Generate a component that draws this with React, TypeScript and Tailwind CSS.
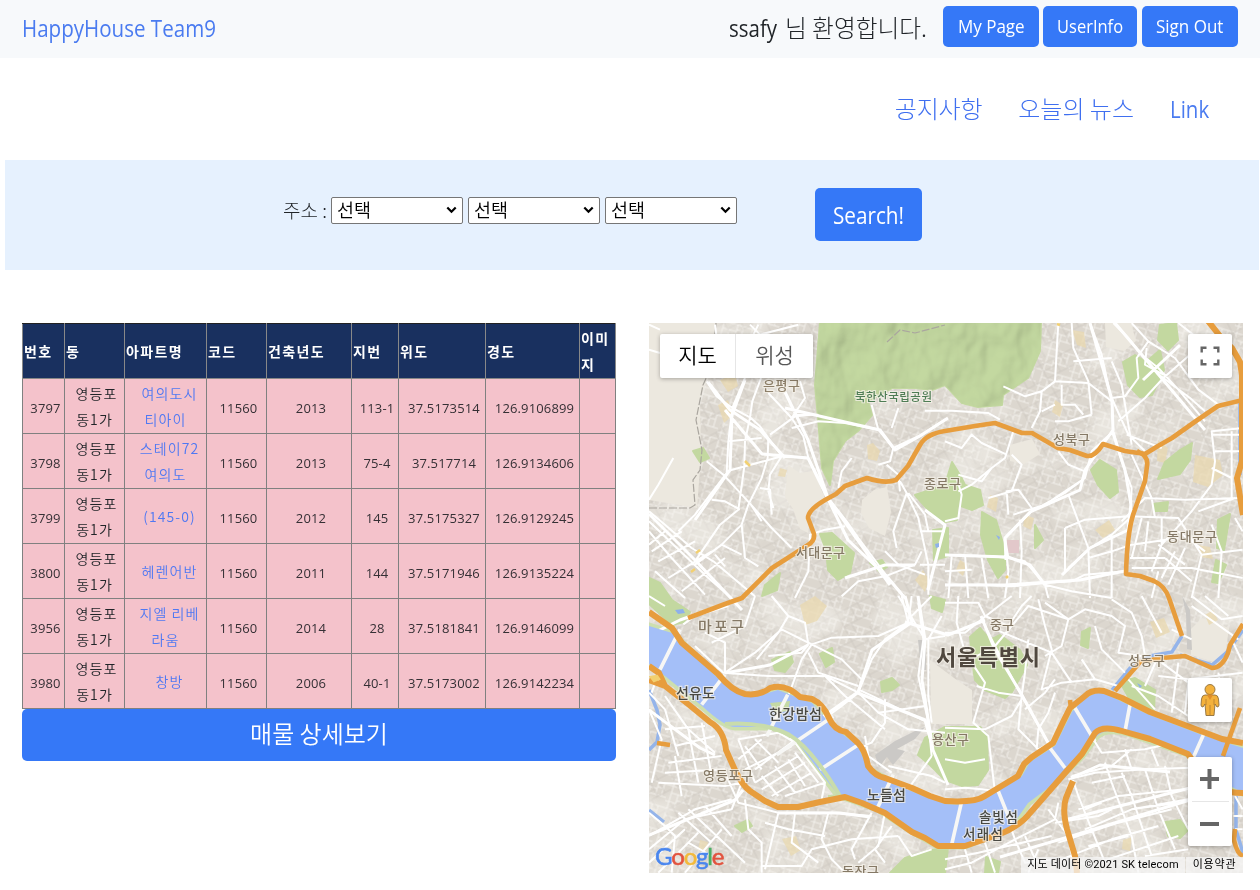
import type { ReactNode } from 'react';

const LATIN = 'font-["Open_Sans","Noto_Sans_CJK_KR",sans-serif]';

type House = { no: string; apt: string[]; year: string; lot: string; lat: string; lng: string };

const houses: House[] = [
  { no: '3797', apt: ['여의도시', '티아이'], year: '2013', lot: '113-1', lat: '37.5173514', lng: '126.9106899' },
  { no: '3798', apt: ['스테이72', '여의도'], year: '2013', lot: '75-4', lat: '37.517714', lng: '126.9134606' },
  { no: '3799', apt: ['(145-0)'], year: '2012', lot: '145', lat: '37.5175327', lng: '126.9129245' },
  { no: '3800', apt: ['헤렌어반'], year: '2011', lot: '144', lat: '37.5171946', lng: '126.9135224' },
  { no: '3956', apt: ['지엘 리베', '라움'], year: '2014', lot: '28', lat: '37.5181841', lng: '126.9146099' },
  { no: '3980', apt: ['창방'], year: '2006', lot: '40-1', lat: '37.5173002', lng: '126.9142234' },
];

function Th({ children }: { children: ReactNode }) {
  return (
    <th className='border border-[#888] border-t-[#222] p-0 pl-px text-left align-middle font-["Noto_Sans_CJK_KR",sans-serif] text-[14px] leading-[26px] font-bold tracking-[1.4px] whitespace-nowrap text-white'>
      {children}
    </th>
  );
}

function Td({ children, className = '' }: { children?: ReactNode; className?: string }) {
  return (
    <td className={`border border-[#808080] p-0 pt-1 text-center align-middle text-[13px] leading-[26px] font-normal tracking-[0.15px] whitespace-nowrap text-[#353035] ${className}`}>
      {children}
    </td>
  );
}

function KoreanTd({ children, link = false }: { children: ReactNode; link?: boolean }) {
  return (
    <td className="border border-[#808080] p-0 text-center align-middle">
      <div className={`font-["Noto_Sans_CJK_KR",sans-serif] text-[14px] leading-[26px] font-[350] tracking-[1.1px] whitespace-nowrap ${link ? 'text-[#4f78f3]' : 'text-[#212529]'}`}>
        {children}
      </div>
    </td>
  );
}

function HouseTable() {
  return (
    <table className="w-[594px] table-fixed border-collapse border border-[#222]">
      <colgroup>
        <col className="w-[42px]" />
        <col className="w-[60px]" />
        <col className="w-[82px]" />
        <col className="w-[60px]" />
        <col className="w-[85px]" />
        <col className="w-[47px]" />
        <col className="w-[87px]" />
        <col className="w-[94px]" />
        <col className="w-[36px]" />
      </colgroup>
      <thead>
        <tr className="h-[55px] bg-[#19305f]">
          <Th>번호</Th>
          <Th>동</Th>
          <Th>아파트명</Th>
          <Th>코드</Th>
          <Th>건축년도</Th>
          <Th>지번</Th>
          <Th>위도</Th>
          <Th>경도</Th>
          <Th>이미<br />지</Th>
        </tr>
      </thead>
      <tbody>
        {houses.map((h) => (
          <tr key={h.no} className="h-[55px] bg-[#f4c2cb]">
            <Td className="pl-1">{h.no}</Td>
            <KoreanTd><span className="pl-[4px]">영등포<br />동1가</span></KoreanTd>
            <KoreanTd link>
              <a className="pl-2">
                {h.apt[0]}
                {h.apt[1] && <><br />{h.apt[1]}</>}
              </a>
            </KoreanTd>
            <Td className="pl-1">11560</Td>
            <Td className="pl-1">{h.year}</Td>
            <Td className="pl-1">{h.lot}</Td>
            <Td className="pl-1">{h.lat}</Td>
            <Td className="pl-1">{h.lng}</Td>
            <Td />
          </tr>
        ))}
      </tbody>
    </table>
  );
}

const parks = [
  'M820 323H1041L1040 351 1028 378 1003 395 1002 405 978 407 962 403 945 385 932 390 915 388 892 388 868 401 872 415 858 431 845 441 833 461 830 485 822 468 818 418 815 385Z',
  'M693 451L703 448 709 458 700 462Z',
  'M649 578L660 583 672 600 690 612 684 622 672 625 649 604Z',
  'M820 534L832 533 854 553 850 573 838 580 828 570 826 550Z',
  'M765 585L780 573 777 590 762 596Z',
  'M870 563L882 560 887 567 880 572Z',
  'M915 495L945 485 952 462 960 475 965 485 980 490 983 505 972 510 958 505 957 520 945 522 930 512Z',
  'M933 530L948 528 948 556 934 560Z',
  'M982 512L996 520 1005 550 1005 570 998 578 988 560 981 535Z',
  'M1100 460L1116 470 1118 492 1110 498 1098 485 1091 470Z',
  'M1123 362L1135 355 1146 362 1160 350 1164 370 1152 395 1140 397 1128 385Z',
  'M1160 325L1176 323 1178 340 1168 350 1158 340Z',
  'M1180 450L1192 443 1190 460 1180 474 1158 479 1165 462Z',
  'M1153 504L1168 502 1167 511 1155 511Z',
  'M1218 520L1230 514 1224 550 1217 548Z',
  'M1216 560L1226 565 1218 583 1212 582Z',
  'M1035 525L1043 540 1035 548Z',
  'M970 637L980 628 990 640 1000 635 1020 650 1027 665 1012 692 1005 698 985 690 975 680 972 660Z',
  'M945 727H980L987 735 988 770 978 785 962 786 945 780 930 765 918 755 925 738Z',
  'M772 660L790 652 793 662 785 672 775 670Z',
  'M820 654L832 648 834 662 826 667Z',
  'M881 682L892 678 899 685 892 690 882 692Z',
  'M930 596L945 600 942 612 932 608Z',
  'M1120 682L1135 678 1155 690 1154 710 1130 700Z',
  'M1082 632L1090 628 1088 648 1081 645Z',
  'M1165 822L1180 820 1188 830 1180 838 1168 836Z',
  'M890 873L905 858 930 850 948 848 945 873Z',
  'M735 826L748 820 752 826 742 832Z',
  'M770 708L785 702 790 714 775 716Z',
  'M986 857L1000 862 998 873H985Z',
];

const tans = [
  'M718 405l10-5 5 15-9 8z', 'M867 445l6-2 7 8-3 10-9-2z', 'M720 380l15-6 3 12-10 6z', 'M780 468l7 2-2 7-7-1z',
  'M915 580l8-10 6 10-4 12z', 'M800 605l15-9 12 10-10 15-12 4z', 'M1055 400l8 5-3 12-8-5z', 'M1072 330l12 2 2 16-9-3z',
  'M1195 455l25 5 3 15-15 12-15-5z', 'M1095 530l14-10 6 10-12 8z', 'M1025 515l9 3-3 12-8-4z', 'M1158 440l10 8-3 15-8-2z',
  'M1150 622l14-4 6 14-14 6z', 'M1205 615l8-5 5 10-9 5z', 'M782 839l14-3 5 14-10 6z', 'M700 840l8 2-2 10-8-2z',
  'M1123 840l9-3-2 14-8-2z', 'M960 560l7 4-4 12-7-6z', 'M990 495l8 3-2 14-9-5z', 'M1198 545l12 2 3 12-12-2z',
];

const campuses = [
  'M649 323H715L710 370 700 400 701 455 697 508 649 500Z',
  'M788 465l12 8 14-2 12 30-15 12-3 20-8-4-7-20-8-12z',
  'M862 500l12-10 13-3 4 25-6 24-16-8-8-15z',
  'M1105 323l26 0 5 18-12 10-18-4z',
  'M1010 445l22-6 8 15-16 10-14-3z',
  'M930 660l24 18 18 12v34h-41z',
  'M1190 630l12-12 27 10-3 22-9 13-26-8z',
];

const streets = [
  // north-west
  'M12 20L45 35M12 95L45 105M315 20L345 50 460 20M325 50L340 20M210 20L215 60M12 580L60 620 140 690 205 730 330 835M12 610L190 780 260 840M12 545L40 500 85 420M12 640L80 720 180 830M20 700L110 640M40 730L150 670M70 780L200 700M110 820L240 720M12 680L60 640M30 760L120 840M185 190L215 235 262 270 315 298 345 325 370 360 412 415M300 180L262 270 250 370 245 465 150 590 100 640M348 180L322 250 315 298 300 370 298 445 280 575 225 620 150 730M370 225L440 300 475 355 490 420 550 540 605 610 640 660 730 780 780 840M250 370L350 360M245 460L300 445 410 415 490 420M185 430L235 470 318 560 380 630 440 690M370 360L368 420 350 480 310 560 290 620 230 680 150 740M410 415L375 470 370 520 385 570M500 290L450 295 375 350M440 330L520 310 600 315 700 335 745 390 735 430 700 440M455 290L520 290M745 390L830 350 900 305M680 260L700 335M440 300L480 240 465 190M318 560L350 610M200 545L240 550 285 575M290 620L300 720 340 745M600 625L540 635 495 650 490 760 450 840M345 510L375 515 380 590M230 680L290 710M210 710L240 745M590 835L640 790 720 775 810 740 830 700M765 490L785 525 820 600 850 740 850 830M785 525L745 640 755 690M790 525L840 590 850 640M725 440L760 470 765 520M620 420L590 460 580 510M760 270L740 330M825 640H900M825 740H900M720 700L760 740 840 770',
  // north-east
  'M-60 278H20L130 285 165 305M340 15L335 100 330 190 290 220 285 280 260 330M380 15L385 90 430 190 440 290M435 15L470 110 500 250 505 340 440 400 420 480 360 525 260 580 180 660 190 720M505 15L550 60 590 110 640 150 700 215 780 310M560 15L610 70 690 120 760 215 820 260M700 15L770 70 735 110 655 180 600 240 520 310M610 70L575 120 580 180 540 235 500 240M655 170L600 140 605 90M635 165L735 240 780 280M330 190L430 195 500 250M350 200V260H390L415 290M330 310L370 310 440 290M385 130L500 120M505 340L530 430 560 510 555 600 500 650 435 690 370 750M500 240L550 350 600 400M500 130L530 200 560 380M220 335L205 340 180 420 140 450 80 500 40 520M175 205L240 235 290 220M0 370L50 390 80 350 110 375 185 410M35 480L50 530 40 600 0 610M40 470L110 490 140 450M205 590L300 560 420 480M190 590L185 520 220 515 260 570M340 400L370 440 420 460M370 530L400 610 430 690M130 540L200 520 230 440 200 410M0 710L140 715 190 720 240 730 300 800 380 820 500 840M0 800L120 800 200 805 300 795 380 790 420 770 540 760M180 660L190 760 180 840M225 605L230 700 225 840M20 715L10 840M60 710L70 840M110 720L130 840M0 760L80 755M360 630L420 605 550 595 700 600 770 710 893 695M360 630L360 760M430 690L435 840M500 650L500 840M430 720L500 700 560 680 700 660M530 610L600 540 720 545 890 540M560 410L620 540 630 600M590 600L560 720M610 610L600 700M650 600V680M555 720H660M560 750H740L893 780M770 710L740 840M740 580L800 500 810 430 800 340 893 330M760 580L870 540M740 580L650 680 620 760M800 350H893M810 400H893M860 340V540M800 450L860 480M870 600L893 640M640 680L720 740M700 640L780 700M660 720L740 790M690 700L650 780M640 760L620 840M720 690L670 800M800 620L830 700 820 840M300 800L310 840M330 260L290 280M545 350L650 390',
  // south-west
  'M12 0L60 30M380 0L430 60 480 80 490 145M430 60L400 110 335 190M330 0L300 90 200 140M105 110L45 220 20 290M115 85L150 60 250 30M150 150L235 230 370 240 540 240 640 290M240 230L330 170 410 100 500 145 590 190 650 250M500 145L470 190 430 300 370 415M500 145L560 125 700 120 790 80 770 0M490 145L470 170 370 180M490 170L520 230 640 270M240 230V140L180 110M800 0L790 80 720 130 680 190 640 290 590 330 330 520M640 290L700 350 790 400M640 280L850 380M540 240L600 300 720 400M820 20L835 130 820 240 850 380 860 480M760 0L840 130 900 120M860 0L790 70M890 60L850 130 850 300 860 380M700 350L840 330M720 310V380L680 440 630 460 540 520M120 260L160 310 200 350M200 310L240 260M12 290L60 340M60 300L130 400 210 470M12 340L50 430 20 560M60 400L180 390M90 450L210 420M90 480L110 600M70 500L230 480M60 530L240 520M130 400L160 560M170 380L200 540M40 560L240 570 290 560M60 340L100 480M240 530L280 620 400 650 560 650 680 660M280 430L400 410 450 440 480 480 540 560 530 610M280 430L330 560M330 560L460 480M280 490L350 430M300 520L440 450M300 450L350 520M330 430L400 500M350 580L480 500M380 600L500 530M420 600L540 560M350 540L400 600M390 510L450 590M430 490L480 570M450 470L520 560M290 560L260 640 120 670 12 760M12 650L60 690 90 720 80 830M12 720L150 640 260 610M100 650L200 740M130 640L300 800M180 630L260 720M12 800L120 700M40 830L160 710M120 830L230 700M300 610L310 700 350 740 350 830M400 650L360 820M360 680L430 700 540 720M450 650L440 740 520 800M550 650L530 730 560 790 600 830M680 650L620 760 630 790M720 650L700 750 640 800M350 810H470L500 760 620 730 760 720M760 720L800 780 860 760M740 690L690 760 720 800M860 480L760 620M690 620L740 560M900 560L860 540 730 510M660 420L670 480 740 530M790 400L900 410M130 740L200 780',
  // south-east
  'M0 20H100L120 60 190 90 230 30 260 0M40 0L35 80 60 170 120 260 85 380 130 420 150 590M0 110L60 110 110 70 200 0M110 70L150 150 230 300 320 460 360 520M150 150L250 30 370 70M60 200L150 150M95 270L160 290 230 300M250 130L240 230 230 300M150 100L320 170 380 260M280 10L300 90 320 160 290 280 350 260 450 250 520 270M300 20L370 70 350 150 300 180M370 70L420 40 500 60 540 90 520 170 590 180M500 10L560 50 590 120 600 180M590 0L650 110M410 190L450 250M450 90L470 160 540 230M330 290L310 350 280 400 275 460M230 310L200 360 120 400 0 395M0 490L60 500 120 490M0 580L60 575 110 580 150 585M160 590L210 730M230 300L220 400 280 460 300 450M390 340L470 470 600 460 730 430M240 340L300 290 330 250M740 0L830 70 893 60M740 30L880 130M780 0L850 60M640 180L600 270M640 240L730 250 893 230M700 200L680 350M650 200L730 260 720 350M560 270L640 300 730 360M550 250L630 340M380 540L500 510 560 460M380 540L400 600 440 700 480 800M370 550L450 530 600 520 740 515M400 640L520 600 720 580M420 700L560 640 730 610M330 680L460 660 500 640M340 740L520 680 680 640M350 790L500 730 640 690M480 500L500 560 560 720 580 830M530 530L560 600 620 780M600 520L640 640 690 760M660 510L680 600 730 700M0 790L100 770 320 720M0 820L80 800 210 730M210 730L240 800 320 790M210 730L330 670 340 620M310 640L370 720 390 830M430 750L550 720M460 800L700 720M440 560L540 540M560 640L700 620M600 780L730 760M250 830L280 760M120 740L150 830M60 760L80 830M540 460L560 520M620 460L640 510M870 600L893 640M865 660H893M870 700H893M420 640L470 620M240 720L270 790M680 100L740 130M860 130L893 200M820 230L840 340',
];

const avenues =
  'M649 514L695 560 742 610M708 382L730 410 760 430 785 458M745 380L732 415 730 470 695 520M725 410L762 454 808 458 848 540 888 578 905 598M785 392L808 440 828 498 856 538 890 585M785 408L845 422 880 430 895 450 920 436 948 418M1090 323L1112 400 1113 430 1085 470 1080 490 1030 512 1005 538 1006 560M1112 430L1125 470 1131 505 1128 530 1090 548 1062 575M945 585H1005L1080 580 1125 571M945 555L1008 557 1030 565 1045 585M845 578L885 565 915 565M925 510L945 525 928 590M1143 380L1180 345M1115 323L1180 400 1205 430M905 596L912 622 872 650 858 692 790 740M808 645L770 665 725 673M640 640L680 620 742 598M858 693L925 720 932 745M995 650L1022 695 1052 750 1066 771M981 616L995 650M905 622L948 635 985 620M918 596L925 640 922 680 933 750 948 785M649 835L735 800 743 790M778 813L840 813 870 817M649 710L700 748 715 755M1071 778L1100 765 1170 772M1065 820L1190 788M1000 857L1075 835 1190 800';

const bridges =
  'M105 934L45 1055M240 1070L170 1160M428 1130L365 1255M565 1195L395 1310M640 1280L525 1355M745 1370L695 1475M950 1450L920 1580M1060 1420L1100 1520M1215 1290L1260 1350M1290 1170L1350 1270M1455 1160L1440 1240M1680 1240L1640 1330';

const highways = [
  'M688 618L725 604 742 598 772 568 808 545 Q815 541 814 534 L808 518 Q808 510 825 500 L836 494 845 486 867 478 Q885 484 896 480 L908 466 920 445 Q926 434 945 431 L975 426 995 423 1022 433 1032 433 1058 448 1070 450 1087 456 Q1095 457 1103 444 L1125 451 1145 454 1158 446 1172 438 1196 421 1218 406 1243 400',
  'M1137 451Q1149 456 1147 466L1145 481 1133 515Q1127 535 1126 574L1140 576 1154 581Q1165 586 1169 598L1182 636',
  'M1115 691L1135 668 1140 662 1162 658 1185 656 1212 668Q1222 668 1228 653L1230 645 1243 624',
  'M1240 708L1223 756',
  'M1070 700L1071 709M657 743L670 745',
  'M1235 829L1234 840Q1237 854 1243 856',
];

const riverside = [
  'M1208 321L1220 336 1232 348 1240 362 1242 375V461L1237 478 1243 515',
  'M649 612L672 628 682 643 718 674 Q732 691 745 694 Q760 696 770 688 Q785 683 800 697 L812 699 Q823 704 829 718 Q834 730 846 732 L858 743 Q865 750 868 766 Q875 776 885 778 L912 788 930 796 945 801 Q975 803 985 796 L1018 776 1024 764 1032 757 1053 743 1063 722 1070 708 1085 696 Q1092 689 1104 691 L1122 698 1150 712 1222 739 1243 743',
  'M649 666L659 673 665 686M649 680L665 686 688 704 710 722 Q724 730 726 750 L735 770 Q742 785 750 791 L765 801 778 807 H798 L820 802 845 797 862 803 885 813 912 832 925 838 938 846 L965 846 1000 834 Q1020 826 1030 813 L1065 773 1082 754 1095 733 Q1102 725 1122 731 L1150 739 1188 754 1205 778 Q1215 793 1243 793',
  'M1073 781L1066 798Q1062 810 1067 829L1075 856 1077 873',
];

type Label = { t: string; x: number; y: number; w: number; s: number; c: string; b?: boolean };
const labels: Label[] = [
  { t: '은평구', x: 763, y: 390, w: 37, s: 13, c: '#8d7f69' },
  { t: '북한산국립공원', x: 855, y: 401, w: 77, s: 11.5, c: '#4f7d55' },
  { t: '성북구', x: 1053, y: 444, w: 37, s: 13, c: '#857966' },
  { t: '종로구', x: 924, y: 488, w: 37, s: 13, c: '#857966' },
  { t: '서대문구', x: 796, y: 557, w: 49, s: 13, c: '#857966' },
  { t: '동대문구', x: 1167, y: 541, w: 50, s: 13, c: '#857966' },
  { t: '마포구', x: 698, y: 632, w: 46, s: 15, c: '#857966' },
  { t: '중구', x: 990, y: 629, w: 24, s: 13, c: '#857966' },
  { t: '서울특별시', x: 936, y: 665, w: 104, s: 22, c: '#50483f', b: true },
  { t: '성동구', x: 1128, y: 665, w: 37, s: 13, c: '#857966' },
  { t: '선유도', x: 676, y: 698, w: 39, s: 14, c: '#494943' },
  { t: '한강밤섬', x: 769, y: 719, w: 53, s: 14, c: '#494943' },
  { t: '용산구', x: 932, y: 744, w: 37, s: 13, c: '#857966' },
  { t: '영등포구', x: 703, y: 780, w: 50, s: 13, c: '#857966' },
  { t: '노들섬', x: 867, y: 800, w: 39, s: 14, c: '#494943' },
  { t: '솔빛섬', x: 979, y: 822, w: 39, s: 13.5, c: '#494943' },
  { t: '서래섬', x: 963, y: 839, w: 40, s: 13.5, c: '#494943' },
  { t: '동작구', x: 842, y: 876, w: 37, s: 13, c: '#857966' },
];

const groupOrigins = ['translate(645 318) scale(.33333)', 'translate(945 318) scale(.33333)', 'translate(645 596) scale(.33333)', 'translate(945 596) scale(.33333)'];

const river =
  'M649 626L672 633 688 649 728 688 Q740 697 755 697 L778 690 812 703 832 726 858 746 868 769 898 786 945 804 Q970 806 985 799 L1022 776 1030 762 1055 746 1072 712 Q1090 690 1104 693 L1145 713 1202 735 1243 748 V793 L1205 772 1188 754 1128 733 Q1105 727 1096 737 L1082 756 1052 785 1028 803 1012 826 965 846 H938 L910 830 878 809 838 795 825 778 798 743 790 734 772 727 735 727 Q725 727 702 706 L665 676 649 664Z';

function SeoulMap() {
  return (
    <svg className="block h-full w-full" viewBox="649 323 594 550">
      <defs>
        <pattern id="blocksA" width="29" height="23" patternUnits="userSpaceOnUse" patternTransform="rotate(17)">
          <path d="M0 3H29M4 0V23M4 10H18M18 3V16M11 16H29M11 10V23M24 3V16M0 19H11M18 8H24" fill="none" stroke="#f4f2ed" strokeWidth=".9" />
        </pattern>
        <pattern id="blocksB" width="37" height="31" patternUnits="userSpaceOnUse" patternTransform="rotate(-28)">
          <path d="M0 5H37M7 0V31M22 5V20M7 20H37M15 20V31M30 0V20M7 12H22" fill="none" stroke="#cbc6be" strokeWidth=".7" />
        </pattern>
        <filter id="hills" x="0" y="0" width="100%" height="100%">
          <feTurbulence type="fractalNoise" baseFrequency=".016 .02" numOctaves="3" seed="8" />
          <feColorMatrix values="0 0 0 0 .94  0 0 0 0 .925  0 0 0 0 .88  5 0 0 0 -2.500" />
        </filter>
        <filter id="relief" x="0" y="0" width="100%" height="100%">
          <feTurbulence type="fractalNoise" baseFrequency=".03 .022" numOctaves="3" seed="3" />
          <feDiffuseLighting surfaceScale="9" lightingColor="#ffffff" result="lit">
            <feDistantLight azimuth="225" elevation="58" />
          </feDiffuseLighting>
          <feComposite in="lit" in2="SourceAlpha" operator="in" />
        </filter>
      </defs>
      <rect x="649" y="323" width="594" height="550" fill="#dcd7cf" />
      <rect x="649" y="323" width="594" height="550" fill="url(#blocksA)" />
      <rect x="649" y="323" width="594" height="550" fill="url(#blocksB)" />
      <rect x="649" y="323" width="594" height="550" filter="url(#hills)" opacity=".45" />
      <g fill="#ece8df">{campuses.map((d) => <path key={d} d={d} />)}</g>
      <g fill="#ead9b0" opacity=".75">{tans.map((d) => <path key={d} d={d} />)}</g>
      <g fill="#c3d8a0" strokeLinejoin="round" stroke="#c3d8a0" strokeWidth="2">{parks.map((d) => <path key={d} d={d} />)}</g>
      <path d={parks[0]} filter="url(#relief)" opacity=".32" className="mix-blend-multiply" />
      <path d="M1006 540h13v13h-13z" fill="#e2c8ca" />
      <path d="M875 755l20-14 20-10 10-4-10 12-18 10 8 2-12 14-6-8-8 10zM1182 596l8 14 2 40-5-1-1-36zM918 640l8 0 0 30-5 0z" fill="#cbc9c6" />
      <path d="M649 508L690 508 695 505 693 480 700 470 702 450 696 420 703 385 712 365 716 323M887 342L900 330 915 333 945 325" fill="none" stroke="#aaa69f" strokeWidth="1.200" strokeDasharray="8 2" />
      <path d={river} fill="#cddfae" stroke="#cddfae" strokeWidth="7" />
      <path d="M649 690L657 710 660 725 657 742 649 750M649 810L664 822M1112 690L1130 668 1150 656 1172 652 1182 636M1180 655L1212 665 1227 652 1243 630M1236 796L1236 830 1243 853M1240 400L1240 475" fill="none" stroke="#94b4ea" strokeWidth="3.500" />
      {streets.map((d, i) => (
        <g key={d} transform={groupOrigins[i]} fill="none" stroke="#fff" strokeLinejoin="round">
          <path d={d} strokeWidth="6" />
        </g>
      ))}
      <path d={avenues} fill="none" stroke="#fff" strokeWidth="3" strokeLinejoin="round" />
      <path d={river} fill="#a4bff8" />
      <path d="M770 703L790 701 788 711 775 713Z" fill="#c4d9a5" />
      <g transform="translate(645 318) scale(.33333)" fill="none" stroke="#f7f7f5" strokeWidth="11">
        <path d={bridges} />
      </g>
      <path d="M725 724Q760 721 788 734Q812 748 840 796L828 797" fill="none" stroke="#c9dcab" strokeWidth="4" />
      <g fill="none" stroke="#e79d3d" strokeWidth="4.600" strokeLinejoin="round">{highways.map((d) => <path key={d} d={d} />)}</g>
      <g fill="none" stroke="#e79d3d" strokeWidth="6" strokeLinejoin="round">{riverside.map((d) => <path key={d} d={d} />)}</g>
      <path d="M651 677l6-1 2 3-5 2zM745 461l5 5M696 553l4-3M691 572l4-3M1006 578l2-2M1057 324l3 1" fill="#f2d071" stroke="#f2d071" strokeWidth="2.500" />
      <path d="M675 610l8-1 2 4-7 1zM935 544l4-1 0 4-3 1zM996 535l4 2-1 3zM1137 683l3 5 2-2z" fill="#8eb0ea" />
      {labels.map((l) => (
        <text
          key={l.t}
          x={l.x}
          y={l.y}
          textLength={l.w}
          fontSize={l.s}
          fill={l.c}
          stroke="#f5f2ea"
          strokeWidth="2.200"
          strokeOpacity=".75"
          paintOrder="stroke"
          className={l.b ? 'font-["Noto_Sans_CJK_KR",sans-serif] font-bold' : 'font-["Noto_Sans_CJK_KR",sans-serif] font-medium'}
        >
          {l.t}
        </text>
      ))}
    </svg>
  );
}

function Pegman() {
  return (
    <svg width="20" height="34" viewBox="0 0 20 34">
      <path d="M5 12Q2 12 1.500 16L1 22Q1 24 3 24L5 21 6 32.500H14L15 21 17 24Q19 24 19 22L18.500 16Q18 12 15 12Z" fill="#f3b13c" stroke="#8f6f3d" strokeWidth=".9" />
      <path d="M7 12L10 17 13 12Z" fill="#e08d2b" />
      <path d="M10 22V32M6 16V22M14 16V22" stroke="#b98130" strokeWidth=".9" fill="none" />
      <circle cx="10" cy="6.500" r="5" fill="#f3b13c" stroke="#8f6f3d" strokeWidth=".9" />
      <path d="M6.500 10.500Q10 13.500 13.500 10.500" fill="none" stroke="#d18c26" />
    </svg>
  );
}

function MapPanel() {
  return (
    <section className="relative h-[550px] w-[594px] overflow-hidden">
      <SeoulMap />
      <div className='absolute top-[11px] left-[11px] flex h-11 w-[153px] rounded-[2px] bg-white font-["Noto_Sans_CJK_KR",sans-serif] text-[21px] leading-[41px] font-[350] shadow-[0_1px_4px_rgba(0,0,0,0.3)]'>
        <span className="w-[76px] border-r border-[#e6e6e6] text-center text-black">지도</span>
        <span className="flex-1 text-center text-[#565656]">위성</span>
      </div>
      <button className="absolute top-[11px] right-[11px] flex size-11 items-center justify-center rounded-[2px] bg-white shadow-[0_1px_4px_rgba(0,0,0,0.3)]">
        <svg width="20" height="20" viewBox="0 0 20 20" fill="none" stroke="#666" strokeWidth="2.400">
          <path d="M1.700 6.500V1.700H6.500M13.500 1.700H18.300V6.500M18.300 13.500V18.300H13.500M6.500 18.300H1.700V13.500" />
        </svg>
      </button>
      <button className="absolute top-[355px] right-[11px] flex size-11 items-center justify-center rounded-[2px] bg-white shadow-[0_1px_4px_rgba(0,0,0,0.3)]">
        <Pegman />
      </button>
      <div className="absolute top-[434px] right-[11px] flex h-[89px] w-11 flex-col items-center rounded-[2px] bg-white shadow-[0_1px_4px_rgba(0,0,0,0.3)]">
        <svg width="20" height="44" viewBox="0 0 20 44" stroke="#666" strokeWidth="4"><path d="M0 22H19M9.500 12V32" /></svg>
        <div className="h-px w-[37px] shrink-0 bg-[#e6e6e6]" />
        <svg width="20" height="44" viewBox="0 0 20 44" stroke="#666" strokeWidth="4"><path d="M0 22H19" /></svg>
      </div>
      <div className="absolute bottom-[1px] left-[6px] font-[Lato,sans-serif] text-[24px] leading-[32px] font-normal tracking-[-1.2px] [-webkit-text-stroke:0.6px_currentColor]">
        <span className="text-[#4a86ee]">G</span>
        <span className="text-[#e2533f]">o</span>
        <span className="text-[#f2b93b]">o</span>
        <span className="text-[#4a86ee]">g</span>
        <span className="text-[#4caf65]">l</span>
        <span className="text-[#e2533f]">e</span>
      </div>
      <div className='absolute right-0 bottom-0 flex h-4 font-[Roboto,"Noto_Sans_CJK_KR",sans-serif] text-[11px] leading-4 whitespace-nowrap text-black'>
        <span className="w-[164px] bg-[#f5f5f5]/75 text-center tracking-[0.15px]">지도 데이터 ©2021 SK telecom</span>
        <span className="ml-px w-[57px] bg-[#f5f5f5]/75 text-center tracking-[0.8px]">이용약관</span>
      </div>
    </section>
  );
}

function AddressSelect() {
  return (
    <div role="combobox" aria-expanded="false" className='flex h-[27px] w-[132px] items-center justify-between rounded-[2px] border border-[#767676] bg-white pr-[5px] pl-[5px] font-["Noto_Sans_CJK_KR",sans-serif] text-[18.500px] leading-[24px] font-[350] text-black'>
      <span className="pb-[3px]">선택</span>
      <svg className="mb-px" width="11" height="8" viewBox="0 0 11 8" fill="none" stroke="#000" strokeWidth="2.200"><path d="M1.300 1.500L5.500 5.700 9.700 1.500" /></svg>
    </div>
  );
}

export default function App() {
  return (
    <div className={`h-[890px] w-[1260px] overflow-hidden bg-white text-[#212529] ${LATIN}`}>
      <header className="flex h-[58px] items-center bg-[#f7f9fb] pr-[22px] pb-[3px] pl-[22px]">
        <a className="mr-auto w-[194px] origin-left scale-x-[.894] text-[23px] leading-[30px] whitespace-nowrap text-[#4a7bf0]">HappyHouse Team9</a>
        <div className="mr-[16px] flex leading-[30px] whitespace-nowrap">
          <span className="w-[56px] origin-left scale-x-[.89] text-[23px]">ssafy</span>
          <span className='-mt-px font-["Noto_Sans_CJK_KR",sans-serif] text-[23.700px] font-light'>님 환영합니다.</span>
        </div>
        <div className="-mt-[3px] flex text-[18.500px] whitespace-nowrap text-white">
          <button className="h-[41px] w-24 rounded-[5px] bg-[#3578f7]"><span className="inline-block scale-x-[.92]">My Page</span></button>
          <button className="ml-1 h-[41px] w-[94px] rounded-[5px] bg-[#3578f7]"><span className="inline-block scale-x-[.89]">UserInfo</span></button>
          <button className="ml-[5px] h-[41px] w-24 rounded-[5px] bg-[#3578f7]"><span className="inline-block scale-x-[.92]">Sign Out</span></button>
        </div>
      </header>
      <nav className='flex h-[102px] items-center justify-end gap-9 pr-[51px] pb-[3px] font-["Noto_Sans_CJK_KR",sans-serif] text-[24px] leading-[30px] font-light whitespace-nowrap text-[#3f6ff0]'>
        <a className="tracking-[-0.2px]">공지사항</a>
        <a>오늘의 뉴스</a>
        <a className='w-[39px] origin-left scale-x-[.89] pt-[2px] font-["Open_Sans",sans-serif] text-[23px] font-normal text-[#4a7bf0]'>Link</a>
      </nav>
      <section className="mr-px ml-[5px] flex h-[110px] items-start bg-[#e6f1fe] pl-[278px]">
        <label className='mt-[36px] w-[48px] font-["Noto_Sans_CJK_KR",sans-serif] text-[19px] leading-[27px] font-light whitespace-nowrap'>주소 :</label>
        <div className="mt-[37px] flex gap-[5px]">
          <AddressSelect />
          <AddressSelect />
          <AddressSelect />
        </div>
        <button className="mt-7 ml-[78px] h-[53px] w-[107px] rounded-[5px] bg-[#3578f7] pt-[1px] text-[23px] text-white"><span className="inline-block scale-x-[.9]">Search!</span></button>
      </section>
      <main className="mt-[53px] flex gap-[33px] pl-[22px]">
        <section className="w-[594px]">
          <HouseTable />
          <button className='block h-[52px] w-full rounded-[5px] bg-[#3578f7] pb-[4px] font-["Noto_Sans_CJK_KR",sans-serif] text-[24px] leading-[30px] font-[350] text-white'>매물 상세보기</button>
        </section>
        <MapPanel />
      </main>
    </div>
  );
}
